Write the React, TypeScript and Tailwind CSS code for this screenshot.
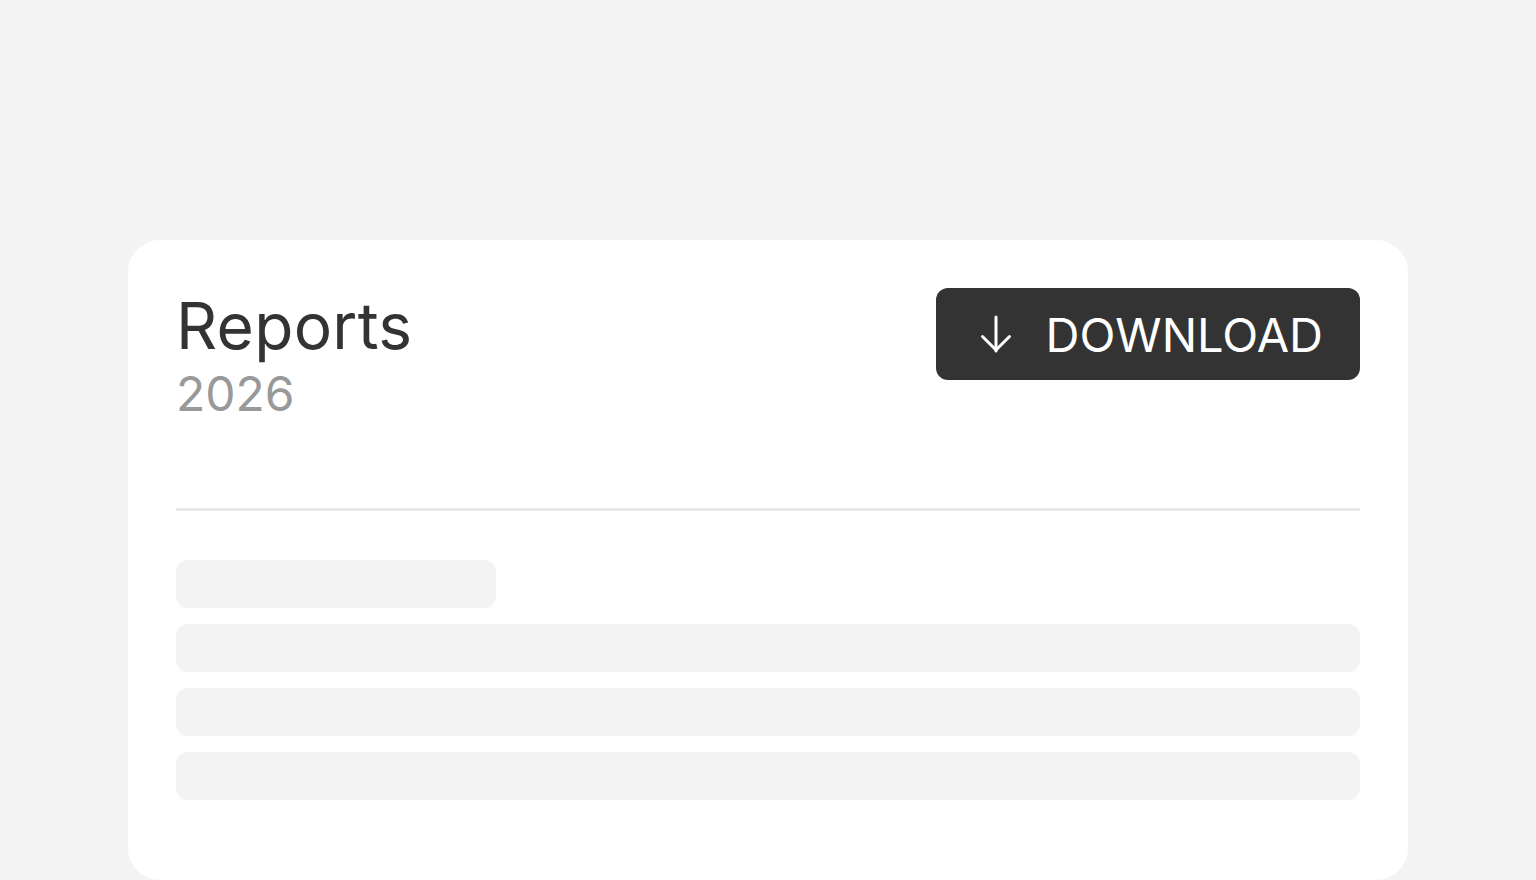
import React from "react";

function ArrowDownIcon() {
  return (
    <svg width="32" height="38" viewBox="0 0 32 38" fill="none" className="shrink-0">
      <path d="M16 2 V36" stroke="white" strokeWidth="3" strokeLinecap="round" />
      <path d="M2.5 21.5 L16 35 L29.5 21.5" stroke="white" strokeWidth="3" strokeLinecap="round" strokeLinejoin="round" />
    </svg>
  );
}

export default function App() {
  return (
    <div className="min-h-[880px] w-full bg-[#f4f4f4] px-32 pt-[240px] font-['Inter',sans-serif]">
      <div className="h-[640px] rounded-[32px] bg-white p-12">
        <div className="flex items-start justify-between">
          <div className="flex flex-col">
            <h1 className="text-[64px] leading-[76px] font-normal tracking-[0.3px] text-[#333333]">Reports</h1>
            <div className="text-[48px] leading-[60px] text-[#999999]">2026</div>
          </div>
          <button className="flex h-[92px] items-center rounded-xl bg-[#333333] pl-[44px] pr-[37px] text-[47px] leading-none text-white">
            <ArrowDownIcon />
            <span className="ml-[33px]">DOWNLOAD</span>
          </button>
        </div>
        <div className="mt-[84px] h-[3px] w-full bg-[#e8e8e8]" />
        <div className="mt-[49px] flex flex-col gap-4">
          <div className="h-12 w-80 rounded-xl bg-[#f4f4f4]" />
          <div className="h-12 w-full rounded-xl bg-[#f4f4f4]" />
          <div className="h-12 w-full rounded-xl bg-[#f4f4f4]" />
          <div className="h-12 w-full rounded-xl bg-[#f4f4f4]" />
        </div>
      </div>
    </div>
  );
}
